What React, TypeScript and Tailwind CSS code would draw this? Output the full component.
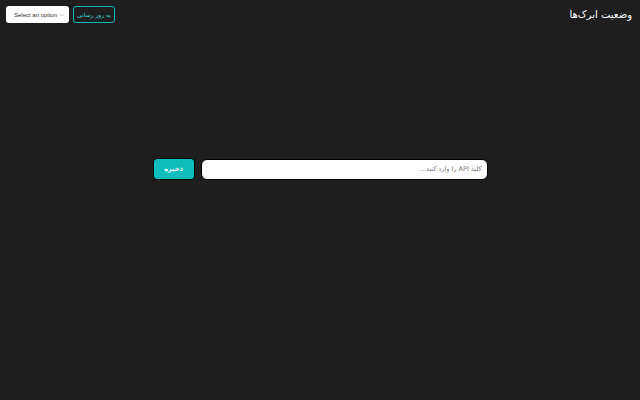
import { ChevronDown } from "lucide-react";

export default function App() {
  return (
    <div
      dir="rtl"
      className="w-[640px] h-[400px] bg-[#1e1e1e] text-white overflow-hidden"
      style={{ fontFamily: '"DejaVu Sans", "Liberation Sans", sans-serif' }}
    >
      <header className="flex items-center justify-between pl-[6px] pr-[8px] pt-[6px] h-[23px]">
        <h1 className="text-[10px] leading-none mt-[1px] text-white">وضعیت ابرک‌ها</h1>
        <div className="flex items-center gap-[4px]">
          <button className="h-[17px] w-[42px] rounded-[3px] border border-[#14b8b8] bg-[#1e1e1e] text-[#3ad4d4] text-[6px] leading-none whitespace-nowrap flex items-center justify-center">
            به روز رسانی
          </button>
          <div
            dir="ltr"
            className="h-[17px] w-[63px] rounded-[3px] bg-white text-[#333] flex items-center justify-between pl-[8px] pr-[3px]"
            style={{ fontFamily: '"Liberation Sans", sans-serif' }}
          >
            <span className="text-[6px] leading-none whitespace-nowrap">Select an option</span>
            <ChevronDown size={8} className="text-[#999] shrink-0" strokeWidth={1.5} />
          </div>
        </div>
      </header>

      <main className="flex justify-center pt-[135px]">
        <div className="flex items-center gap-[6px]">
          <input
            type="text"
            placeholder="کلید API را وارد کنید..."
            className="h-[21px] w-[287px] rounded-[6px] bg-white border border-black px-[5px] text-[6.5px] text-[#333] placeholder:text-[#777] outline-none"
          />
          <button className="h-[22px] w-[42px] rounded-[4px] bg-[#0fbdbd] border border-black text-white text-[6.5px] font-bold leading-none">
            ذخیره
          </button>
        </div>
      </main>
    </div>
  );
}
